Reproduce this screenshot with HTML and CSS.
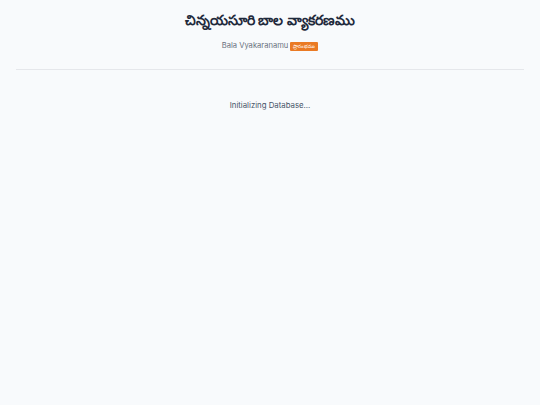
FILE: index.html
```html
<!DOCTYPE html>
<html lang="te">
<head>
<meta charset="utf-8">
<link rel="stylesheet" href="styles.css">
</head>
<body>
<div class="page">
  <header class="header">
    <h1 class="title">చిన్నయసూరి బాల వ్యాకరణము</h1>
    <div class="subtitle">
      <span>Bala Vyakaranamu</span>
      <span class="badge">ప్రారంభము</span>
    </div>
  </header>
  <hr class="divider">
  <main class="status">Initializing Database...</main>
</div>
</body>
</html>
```

FILE: styles.css
```css
html, body {
  margin: 0;
  padding: 0;
  background: #f8fafc;
  font-family: Inter, Roboto, "Noto Sans", sans-serif;
}
.page {
  padding: 9px 16px 0;
}
.header {
  display: flex;
  flex-direction: column;
  align-items: center;
}
.title {
  margin: 0;
  font-size: 14px;
  line-height: 22px;
  font-weight: 700;
  color: #1e293b;
}
.subtitle {
  margin-top: 10px;
  display: flex;
  align-items: center;
  gap: 2px;
  font-size: 7.6px;
  line-height: 10px;
  color: #6b7280;
}
.badge {
  background: #ea7a24;
  color: #fff;
  font-size: 5px;
  padding: 2px 3px;
  border-radius: 1px;
  line-height: 5px;
}
.divider {
  border: 0;
  border-top: 1px solid #e5e7eb;
  margin: 18px 0 0;
}
.status {
  margin-top: 30px;
  text-align: center;
  font-size: 7.8px;
  color: #475569;
}
```
